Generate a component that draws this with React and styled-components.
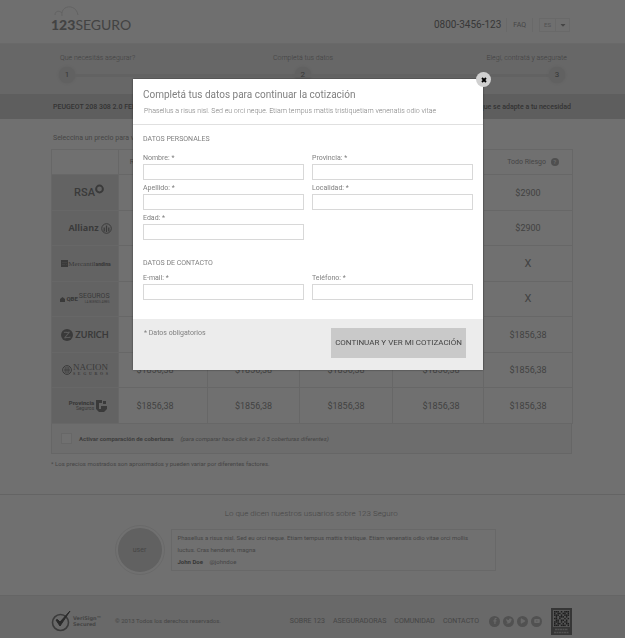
import React from 'react';
import styled, { createGlobalStyle } from 'styled-components';
import { FaFacebookF, FaTwitter, FaYoutube, FaCaretDown } from 'react-icons/fa';
import { FaPlay } from 'react-icons/fa6';

const PRICE = '$1856,38';

const INSURERS = [
    { id: 'rsa', logo: <RsaLogo />, prices: ['$1200', '$1500', '$1900', '$2300', '$2900'] },
    { id: 'allianz', logo: <AllianzLogo />, prices: ['$1200', '$1500', '$1900', '$2300', '$2900'] },
    { id: 'mercantil', logo: <MercantilLogo />, prices: [PRICE, PRICE, PRICE, PRICE, 'X'] },
    { id: 'qbe', logo: <QbeLogo />, prices: [PRICE, PRICE, PRICE, PRICE, 'X'] },
    { id: 'zurich', logo: <ZurichLogo />, prices: [PRICE, PRICE, PRICE, PRICE, PRICE] },
    { id: 'nacion', logo: <NacionLogo />, prices: [PRICE, PRICE, PRICE, PRICE, PRICE] },
    { id: 'provincia', logo: <ProvinciaLogo />, prices: [PRICE, PRICE, PRICE, PRICE, PRICE] },
];

const QR = [
    '111010111',
    '101101101',
    '111010111',
    '010111010',
    '110100101',
    '011011010',
    '111010110',
    '101101011',
    '111011101',
];

function App() {
    return (
        <>
            <GlobalStyle />
            <Page>
                <Header />
                <Steps />
                <TitleBar>
                    <Wrap>
                        <TitleRow>
                            <h1>PEUGEOT 208 308 2.0 FELINE</h1>
                            <p>Elegí el seguro que se adapte a tu necesidad</p>
                        </TitleRow>
                    </Wrap>
                </TitleBar>
                <Quotes />
                <Testimonial />
                <Footer />
            </Page>
            <Overlay>
                <QuoteModal />
            </Overlay>
        </>
    );
}

export default App;

function Header() {
    return (
        <HeaderBar>
            <Wrap>
                <HeaderRow>
                    <Brand href="#">
                        <Cloud viewBox="0 0 26 12" aria-hidden="true">
                            <path d="M1 9 C1 5 5 4 8 7 M8 10 C6 -1 22 -3 24 9" />
                        </Cloud>
                        <b>123</b>SEGURO
                    </Brand>
                    <Phone>0800-3456-123</Phone>
                    <Faq href="#">FAQ</Faq>
                    <Lang>
                        <select aria-label="Idioma" defaultValue="es">
                            <option value="es">ES</option>
                        </select>
                        <FaCaretDown />
                    </Lang>
                </HeaderRow>
            </Wrap>
        </HeaderBar>
    );
}

function Steps() {
    return (
        <StepsBar>
            <Wrap>
                <StepLabels>
                    <span>Que necesitás asegurar?</span>
                    <span>Completá tus datos</span>
                    <span>Elegí, contratá y asegurate</span>
                </StepLabels>
                <Track>
                    <Dot>1</Dot>
                    <Line $grow={12} />
                    <Dot>2</Dot>
                    <Line $grow={13} />
                    <Dot>3</Dot>
                </Track>
            </Wrap>
        </StepsBar>
    );
}

function Quotes() {
    return (
        <Wrap>
            <Hint>Seleccina un precio para ver el detalle</Hint>
            <Table>
                <colgroup>
                    <col style={{ width: 67 }} />
                    <col style={{ width: 89 }} />
                    <col style={{ width: 92 }} />
                    <col style={{ width: 93 }} />
                    <col style={{ width: 91 }} />
                    <col style={{ width: 89 }} />
                </colgroup>
                <thead>
                    <tr>
                        <th></th>
                        <th>Responsabilidad Civil</th>
                        <th>Terceros</th>
                        <th>Terceros Completo</th>
                        <th>Terceros Full</th>
                        <th>Todo Riesgo <Help>?</Help></th>
                    </tr>
                </thead>
                <tbody>
                    {INSURERS.map((row) => (
                        <tr key={row.id}>
                            <LogoCell scope="row">{row.logo}</LogoCell>
                            {row.prices.map((price, i) => (
                                <PriceCell key={i} $off={price === 'X'}>{price}</PriceCell>
                            ))}
                        </tr>
                    ))}
                </tbody>
            </Table>
            <Compare>
                <input type="checkbox" />
                <b>Activar comparación de coberturas</b>
                <i>(para comparar hace click en 2 ó 3 coberturas diferentes)</i>
            </Compare>
            <Note>* Los precios mostrados son aproximados y pueden variar por diferentes factores.</Note>
        </Wrap>
    );
}

function Testimonial() {
    return (
        <Opinions>
            <h2>Lo que dicen nuestros usuarios sobre 123 Seguro</h2>
            <OpinionRow>
                <Avatar>user</Avatar>
                <Quote>
                    <p>
                        Phasellus a risus nisl. Sed eu orci neque. Etiam tempus mattis tristique. Etiam venenatis odio vitae orci mollis<br />
                        luctus. Cras hendrerit, magna
                    </p>
                    <footer><b>John Doe</b> <span>@johndoe</span></footer>
                </Quote>
            </OpinionRow>
        </Opinions>
    );
}

function Footer() {
    return (
        <FooterBar>
            <Wrap>
                <FooterRow>
                    <Verisign>
                        <svg width="20" height="22" viewBox="0 0 20 22" aria-hidden="true">
                            <circle cx="9.5" cy="12.5" r="8" fill="none" stroke="#868686" strokeWidth="1.6" />
                            <path d="M5 10 L9 16 L19 1 L9 12 L6.5 9.5 Z" fill="#606060" stroke="#606060" />
                        </svg>
                        <span>VeriSign™<br />Secured</span>
                    </Verisign>
                    <Copyright>© 2013 Todos los derechos reservados.</Copyright>
                    <FooterNav>
                        <a href="#">SOBRE 123</a>
                        <a href="#">ASEGURADORAS</a>
                        <a href="#">COMUNIDAD</a>
                        <a href="#">CONTACTO</a>
                    </FooterNav>
                    <Social>
                        <a href="#" aria-label="Facebook"><FaFacebookF /></a>
                        <a href="#" aria-label="Twitter"><FaTwitter /></a>
                        <a href="#" aria-label="Videos"><FaPlay /></a>
                        <a href="#" aria-label="YouTube"><FaYoutube /></a>
                    </Social>
                    <svg width="21" height="27" viewBox="0 0 21 27" aria-hidden="true">
                        <rect width="21" height="27" fill="#7c7c7c" />
                        <rect x="2" y="2" width="17" height="17" fill="#c4c4c4" />
                        {QR.map((line, y) => line.split('').map((bit, x) => (
                            bit === '1' && <rect key={`${x}-${y}`} x={3 + x * 1.7} y={3 + y * 1.7} width="1.5" height="1.5" fill="#444" />
                        )))}
                        <path d="M4 21.5H17M3 24.5H18" stroke="#bbb" strokeWidth="1.4" strokeDasharray="2 .5" />
                    </svg>
                </FooterRow>
            </Wrap>
        </FooterBar>
    );
}

function Field({ id, label, type = 'text' }) {
    return (
        <FieldBox>
            <label htmlFor={id}>{label}: *</label>
            <input id={id} type={type} />
        </FieldBox>
    );
}

function QuoteModal() {
    return (
        <Modal role="dialog" aria-labelledby="modal-title">
            <Close type="button" aria-label="Cerrar">
                <svg width="6" height="6" viewBox="0 0 6 6"><path d="M1 1L5 5M5 1L1 5" stroke="#000" strokeWidth="1.8" /></svg>
            </Close>
            <ModalHead>
                <h2 id="modal-title">Completá tus datos para continuar la cotización</h2>
                <p>Phasellus a risus nisl. Sed eu orci neque. Etiam tempus mattis tristiquetiam venenatis odio vitae</p>
            </ModalHead>
            <form>
                <ModalBody>
                    <Legend>DATOS PERSONALES</Legend>
                    <Fields $top={9}>
                        <Field id="nombre" label="Nombre" />
                        <Field id="provincia" label="Provincia" />
                        <Field id="apellido" label="Apellido" />
                        <Field id="localidad" label="Localidad" />
                        <Field id="edad" label="Edad" />
                    </Fields>
                    <Legend $top={18}>DATOS DE CONTACTO</Legend>
                    <Fields $top={5}>
                        <Field id="email" label="E-mail" type="email" />
                        <Field id="telefono" label="Teléfono" type="tel" />
                    </Fields>
                </ModalBody>
                <ModalFoot>
                    <p>* Datos obligatorios</p>
                    <Submit type="button">CONTINUAR Y VER MI COTIZACIÓN</Submit>
                </ModalFoot>
            </form>
        </Modal>
    );
}

/* Insurer logos */

function RsaLogo() {
    return (
        <Logo $size={11} $weight={500} $indent={8} $gap={0}>
            <span>RSA</span>
            <svg width="9" height="18" viewBox="0 0 9 18"><circle cx="4.5" cy="5" r="3.4" fill="none" stroke="currentColor" strokeWidth="2" /></svg>
        </Logo>
    );
}

function AllianzLogo() {
    return (
        <Logo $size={9} $weight={700} $indent={10} $font="'Open Sans'">
            <span>Allianz</span>
            <svg width="11" height="11" viewBox="0 0 11 11" fill="none" stroke="currentColor">
                <circle cx="5.5" cy="5.5" r="4.8" />
                <path d="M3.2 8.5V4.5M5.5 9V2.5M7.8 8.5V4.5" strokeWidth="1.3" />
            </svg>
        </Logo>
    );
}

function MercantilLogo() {
    return (
        <Logo $size={7} $font="'Liberation Serif'" $gap={0} $indent={2}>
            <svg width="7" height="7" viewBox="0 0 7 7"><rect width="7" height="7" fill="currentColor" /><path d="M1 2.5H6M1 4.5H4M5 4.5H6" stroke="#999" /></svg>
            <span>Mercantil</span>
            <LogoBold $size={5}>andina</LogoBold>
        </Logo>
    );
}

function QbeLogo() {
    return (
        <Logo $size={7} $gap={1}>
            <svg width="5" height="5" viewBox="0 0 5 5"><path d="M0 2L2.5 0L5 2V5H0Z" fill="currentColor" /></svg>
            <LogoBold $size={6}>QBE</LogoBold>
            <LogoStack>
                <span>SEGUROS</span>
                <LogoSub $size={3}>LA BUENOS AIRES</LogoSub>
            </LogoStack>
        </Logo>
    );
}

function ZurichLogo() {
    return (
        <Logo $size={9} $weight={700} $font="Lato">
            <svg width="12" height="12" viewBox="0 0 12 12"><circle cx="6" cy="6" r="6" fill="currentColor" /><path d="M3 3.5C5 2.5 6 4.5 8.5 3L3.5 9C6 7.5 7 9.5 9.5 8" fill="none" stroke="#d0d0d0" strokeWidth="1.1" /></svg>
            <span>ZURICH</span>
        </Logo>
    );
}

function NacionLogo() {
    return (
        <Logo $size={9} $font="'Liberation Serif'" $gap={1}>
            <svg width="10" height="10" viewBox="0 0 10 10" fill="none" stroke="currentColor">
                <circle cx="5" cy="5" r="4.4" />
                <path d="M3.2 2V8M5 1.5V8.5M6.8 2V8M2 5H8" strokeWidth=".8" />
            </svg>
            <LogoStack>
                <span>NACION</span>
                <LogoSub $size={4} $spread>{'SEGUROS'.split('').map((c, i) => <b key={i}>{c}</b>)}</LogoSub>
            </LogoStack>
        </Logo>
    );
}

function ProvinciaLogo() {
    return (
        <Logo $size={6} $indent={6}>
            <LogoStack>
                <LogoBold $size={6}>Provincia</LogoBold>
                <LogoSub $size={5}>Seguros</LogoSub>
            </LogoStack>
            <svg width="11" height="12" viewBox="0 0 11 12"><path d="M0 0H6V3H3V9H5V6H11V9L8 12H3L0 9Z M7 1H10V4H7Z" fill="currentColor" /></svg>
        </Logo>
    );
}

// Style Components

const GlobalStyle = createGlobalStyle`
    * {
        box-sizing: border-box;
        margin: 0;
        padding: 0;
    }
    body {
        background: #fff;
        font-family: Roboto, "Liberation Sans", sans-serif;
        font-size: 7px;
        line-height: 10px;
        color: #a0a0a0;
    }
    a {
        color: inherit;
        text-decoration: none;
    }
    svg {
        display: block;
        flex: none;
    }
    button, input, select {
        font: inherit;
        color: inherit;
    }
`

const Page = styled.div`
    min-height: 100vh;
    overflow: hidden;
`

const Wrap = styled.div`
    width: 100%;
    padding: 0 53px 0 51px;
`

const HeaderBar = styled.header`
    background: #fdfdfd;
    border-bottom: 1px solid #eee;
`

const HeaderRow = styled.div`
    display: flex;
    align-items: center;
    height: 43px;
    padding-top: 6px;
`

const Brand = styled.a`
    position: relative;
    margin-right: auto;
    font-family: Lato, sans-serif;
    font-size: 14px;
    line-height: 18px;
    color: #989898;
    b {
        font-weight: 900;
    }
`

const Cloud = styled.svg`
    position: absolute;
    left: 3px;
    top: -10px;
    width: 26px;
    height: 12px;
    fill: none;
    stroke: #dedede;
`

const Phone = styled.span`
    font-size: 10px;
    line-height: 14px;
    color: #808080;
`

const Faq = styled.a`
    margin: 0 6px 0 5px;
    padding: 2px 6px;
    border-left: 1px solid #efefef;
    border-right: 1px solid #efefef;
`

const Lang = styled.div`
    display: flex;
    align-items: center;
    width: 31px;
    height: 14px;
    margin-right: 2px;
    border: 1px solid #efefef;
    select {
        width: 16px;
        height: 12px;
        padding-left: 4px;
        border: 0;
        border-right: 1px solid #efefef;
        background: none;
        font-size: 6px;
        color: #b8b8b8;
        appearance: none;
    }
    svg {
        margin: 0 auto;
        font-size: 8px;
    }
`

const StepsBar = styled.nav`
    height: 50px;
    padding-top: 9px;
    background: #eaeaea;
`

const StepLabels = styled.div`
    display: grid;
    grid-template-columns: 42% 1fr auto;
    padding: 0 5px 0 9px;
    font-weight: 300;
    color: #959595;
`

const Track = styled.div`
    display: flex;
    align-items: center;
    margin-top: 4px;
    padding: 0 7px 0 8px;
`

const Dot = styled.span`
    width: 16px;
    height: 16px;
    border-radius: 50%;
    background: #dcdcdc;
    box-shadow: 0 0 3px #d4d4d4;
    font-size: 8px;
    line-height: 16px;
    text-align: center;
    color: #808080;
`

const Line = styled.span`
    flex: ${props => props.$grow};
    height: 3px;
    background: #dfdfdf;
`

const TitleBar = styled.div`
    background: #d6d6d6;
`

const TitleRow = styled.div`
    display: flex;
    align-items: center;
    justify-content: space-between;
    height: 25px;
    padding: 0 1px 0 2px;
    color: #777;
    h1, p {
        font-size: 7px;
        font-weight: 500;
    }
`

const Hint = styled.p`
    padding: 14px 2px 6px;
`

const Table = styled.table`
    width: 100%;
    table-layout: fixed;
    border-collapse: collapse;
    border: 1px solid #ebebeb;
    th, td {
        border-left: 1px solid #ebebeb;
        border-bottom: 1px solid #ebebeb;
        text-align: center;
        vertical-align: middle;
        white-space: nowrap;
    }
    thead th {
        height: 25px;
        font-weight: 400;
    }
    thead th:last-child {
        padding-left: 10px;
    }
    tbody tr {
        height: 36px;
    }
    tbody tr:nth-child(even) {
        height: 35px;
    }
`

const PriceCell = styled.td`
    font-size: ${props => props.$off ? 11 : 9}px;
    color: #979797;
    &:nth-child(2) {
        padding-right: 16px;
    }
    &:nth-child(5) {
        padding-left: 6px;
    }
`

const LogoCell = styled.th`
    background: #e2e2e2;
    color: #858585;
`

const Help = styled.span`
    display: inline-block;
    width: 8px;
    height: 8px;
    margin-left: 3px;
    border-radius: 50%;
    background: #b4b4b4;
    font-size: 6px;
    font-weight: 700;
    line-height: 8px;
    color: #eee;
`

const Logo = styled.span`
    display: flex;
    align-items: center;
    justify-content: center;
    gap: ${props => props.$gap ?? 2}px;
    padding-left: ${props => props.$indent || 0}px;
    font-family: ${props => props.$font || 'Roboto'}, sans-serif;
    font-size: ${props => props.$size}px;
    font-weight: ${props => props.$weight || 400};
`

const LogoStack = styled.span`
    display: flex;
    flex-direction: column;
    line-height: 6px;
    > span {
        line-height: 7px;
    }
`

const LogoBold = styled.b`
    font-family: Roboto, sans-serif;
    font-size: ${props => props.$size}px;
    font-weight: 900;
`

const LogoSub = styled.small`
    display: ${props => props.$spread ? 'flex' : 'block'};
    justify-content: space-between;
    font-size: ${props => props.$size}px;
    font-weight: 400;
    line-height: 5px;
    text-align: right;
`

const Compare = styled.label`
    display: flex;
    align-items: center;
    height: 30px;
    padding-left: 9px;
    border: 1px solid #e8e8e8;
    border-top: 0;
    background: #f7f7f7;
    font-size: 6px;
    input {
        width: 11px;
        height: 11px;
        margin-right: 7px;
        border: 1px solid #ebebeb;
        background: #fff;
        appearance: none;
    }
    b {
        margin-right: 7px;
        font-weight: 700;
        color: #909090;
    }
`

const Note = styled.p`
    padding-top: 5px;
    font-size: 6px;
`

const Opinions = styled.section`
    margin-top: 25px;
    padding: 14px 20% 21px 18%;
    border-top: 1px solid #e4e4e4;
    h2 {
        padding-left: 10px;
        font-size: 8px;
        font-weight: 300;
        text-align: center;
    }
`

const OpinionRow = styled.div`
    display: flex;
    align-items: center;
    gap: 7px;
    margin-top: 7px;
    padding: 0 4px 0 3px;
`

const Avatar = styled.div`
    flex: none;
    width: 48px;
    height: 48px;
    border: 2px solid #fff;
    border-radius: 50%;
    outline: 1px solid #efefef;
    background: #dcdcdc;
    line-height: 44px;
    text-align: center;
`

const Quote = styled.blockquote`
    flex: 1;
    padding: 2px 6px;
    border: 1px solid #ededed;
    font-size: 6px;
    line-height: 12px;
    white-space: nowrap;
    b {
        margin-right: 5px;
        font-weight: 700;
        color: #808080;
    }
`

const FooterBar = styled.footer`
    background: #eee;
    border-top: 1px solid #e6e6e6;
`

const FooterRow = styled.div`
    display: flex;
    align-items: center;
    height: 42px;
    padding-top: 8px;
`

const Verisign = styled.div`
    display: flex;
    align-items: center;
    gap: 2px;
    width: 64px;
    span {
        font-family: "DejaVu Sans", sans-serif;
        font-size: 5px;
        font-weight: 700;
        line-height: 6px;
    }
`

const Copyright = styled.p`
    margin-right: auto;
    font-size: 6px;
`

const FooterNav = styled.nav`
    display: flex;
    gap: 8px;
`

const Social = styled.div`
    display: flex;
    gap: 3px;
    margin: 0 9px 0 10px;
    a {
        display: grid;
        place-items: center;
        width: 11px;
        height: 11px;
        border-radius: 50%;
        background: #b8b8b8;
        color: #eee;
        font-size: 6px;
    }
`

const Overlay = styled.div`
    position: fixed;
    inset: 0;
    display: flex;
    align-items: flex-start;
    justify-content: center;
    padding: 79px 9px 0 0;
    background: rgba(0, 0, 0, 0.56);
`

const Modal = styled.div`
    position: relative;
    width: 56vw;
    min-width: 350px;
    background: #fff;
    color: #808080;
    box-shadow: 0 0 2px rgba(0, 0, 0, 0.5);
`

const Close = styled.button`
    position: absolute;
    top: -7px;
    right: -8px;
    display: grid;
    place-items: center;
    width: 15px;
    height: 15px;
    border: 0;
    border-radius: 50%;
    background: #d0d0d0;
`

const ModalHead = styled.div`
    padding: 9px 10px 8px;
    border-bottom: 1px solid #e0e0e0;
    h2 {
        font-size: 10px;
        font-weight: 400;
        line-height: 14px;
    }
    p {
        padding: 4px 1px 0;
        font-size: 7px;
        font-weight: 300;
        white-space: nowrap;
    }
`

const ModalBody = styled.div`
    padding: 9px 10px 19px;
`

const Legend = styled.h3`
    margin-top: ${props => props.$top || 0}px;
    font-size: 7px;
    font-weight: 400;
`

const Fields = styled.div`
    display: grid;
    grid-template-columns: 1fr 1fr;
    gap: 3px 8px;
    margin-top: ${props => props.$top}px;
`

const FieldBox = styled.div`
    display: flex;
    flex-direction: column;
    label {
        line-height: 11px;
    }
    input {
        width: 100%;
        height: 16px;
        padding: 0 4px;
        border: 1px solid #d8d8d8;
        background: #fff;
    }
`

const ModalFoot = styled.div`
    display: flex;
    align-items: flex-start;
    justify-content: space-between;
    padding: 9px 17px 12px 11px;
    background: #ececec;
`

const Submit = styled.button`
    height: 30px;
    padding: 0 4px;
    border: 0;
    background: #c9c9c9;
    font-size: 8px;
    color: #444;
`
